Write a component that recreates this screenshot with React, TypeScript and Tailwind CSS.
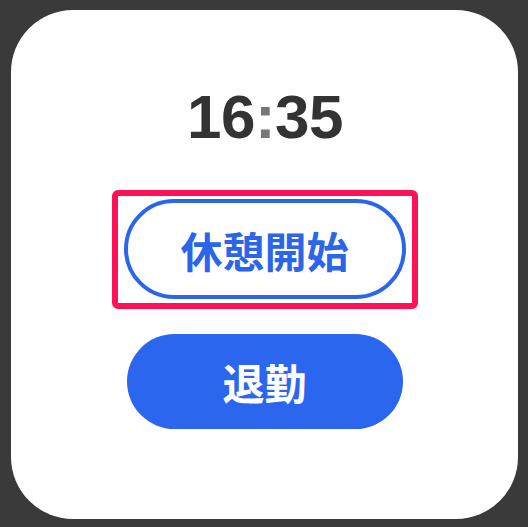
import React from 'react';

const jp = { fontFamily: '"Noto Sans CJK JP", "Noto Sans", sans-serif' };

export default function App() {
  return (
    <div className="w-[528px] h-[527px] bg-[#3a3a3a] pt-[10px] pl-[11px]">
      <div className="w-[507px] h-[509px] bg-white rounded-[62px] flex flex-col items-center pt-[76px]">
        {/* Clock */}
        <div
          className="text-[62px] leading-none font-bold text-[#333333] tracking-[-0.5px] ml-[1px]"
          style={{ fontFamily: '"Liberation Sans", Arial, sans-serif' }}
        >
          16<span className="text-[#777777]">:</span>35
        </div>

        {/* Break start (highlighted) */}
        <div className="mt-[42px] border-[6px] border-[#ff1158] rounded-[6px] px-[6px] pt-[3px] pb-[4px]">
          <button
            className="w-[282px] h-[100px] rounded-full border-[4px] border-[#2b66ea] bg-white text-[#2b66ea] text-[42px] font-bold flex items-center justify-center"
            style={jp}
          >
            休憩開始
          </button>
        </div>

        {/* Clock out */}
        <button
          className="mt-[25px] w-[276px] h-[95px] rounded-full bg-[#2b66ee] text-white text-[42px] font-bold flex items-center justify-center"
          style={jp}
        >
          退勤
        </button>
      </div>
    </div>
  );
}
